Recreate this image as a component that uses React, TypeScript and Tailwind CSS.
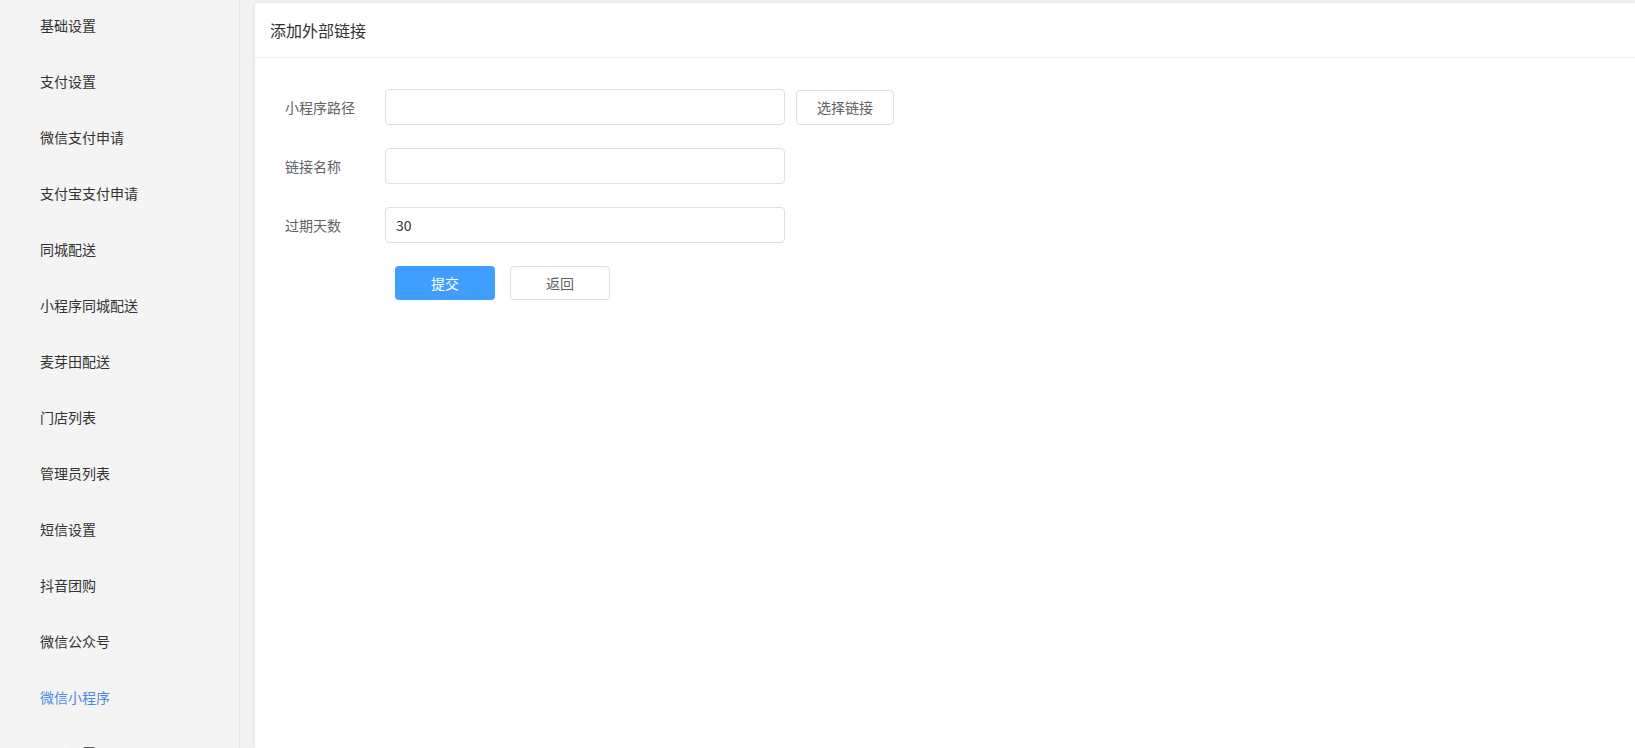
const MENU = [
  "基础设置",
  "支付设置",
  "微信支付申请",
  "支付宝支付申请",
  "同城配送",
  "小程序同城配送",
  "麦芽田配送",
  "门店列表",
  "管理员列表",
  "短信设置",
  "抖音团购",
  "微信公众号",
  "微信小程序",
  "显示设置",
];

const ACTIVE = "微信小程序";

function FormRow({ label, children }: { label: string; children: React.ReactNode }) {
  return (
    <div className="flex items-center mb-[23px]">
      <label className="w-[100px] shrink-0 text-sm text-[#606266]">{label}</label>
      {children}
    </div>
  );
}

function TextInput({ value = "" }: { value?: string }) {
  return (
    <input
      defaultValue={value}
      className="w-[400px] h-9 rounded border border-[#dcdfe6] bg-white px-[10px] text-sm text-[#303133] outline-none"
    />
  );
}

export default function App() {
  return (
    <div
      className="flex h-[748px] w-full overflow-hidden bg-[#f2f2f2]"
      style={{ fontFamily: '"Noto Sans CJK SC", "Noto Sans", sans-serif' }}
    >
      <aside className="w-[240px] shrink-0 h-full bg-[#f4f4f4] border-r border-[#e4e4e4] overflow-hidden">
        <ul className="-mt-[3px]">
          {MENU.map((item) => (
            <li
              key={item}
              className={
                item === ACTIVE
                  ? "h-14 flex items-center pl-10 text-sm text-[#4a8ae6]"
                  : "h-14 flex items-center pl-10 text-sm text-[#333333]"
              }
            >
              {item}
            </li>
          ))}
        </ul>
      </aside>

      <main className="flex-1 min-w-0 pl-[15px] pt-[3px]">
        <div className="h-full bg-white rounded-tl shadow-[0_0_4px_rgba(0,0,0,0.08)]">
          <div className="h-[55px] flex items-center px-[15px] border-b border-[#efefef]">
            <h2 className="text-base text-[#303133]">添加外部链接</h2>
          </div>

          <div className="pt-[31px] pl-[30px]">
            <FormRow label="小程序路径">
              <TextInput />
              <button className="ml-[11px] h-[35px] w-[98px] rounded border border-[#dcdfe6] bg-white text-sm text-[#606266]">
                选择链接
              </button>
            </FormRow>
            <FormRow label="链接名称">
              <TextInput />
            </FormRow>
            <FormRow label="过期天数">
              <TextInput value="30" />
            </FormRow>

            <div className="flex gap-[15px] pl-[110px]">
              <button className="h-[34px] w-[100px] rounded bg-[#409eff] text-sm text-white">
                提交
              </button>
              <button className="h-[34px] w-[100px] rounded border border-[#dcdfe6] bg-white text-sm text-[#606266]">
                返回
              </button>
            </div>
          </div>
        </div>
      </main>
    </div>
  );
}
